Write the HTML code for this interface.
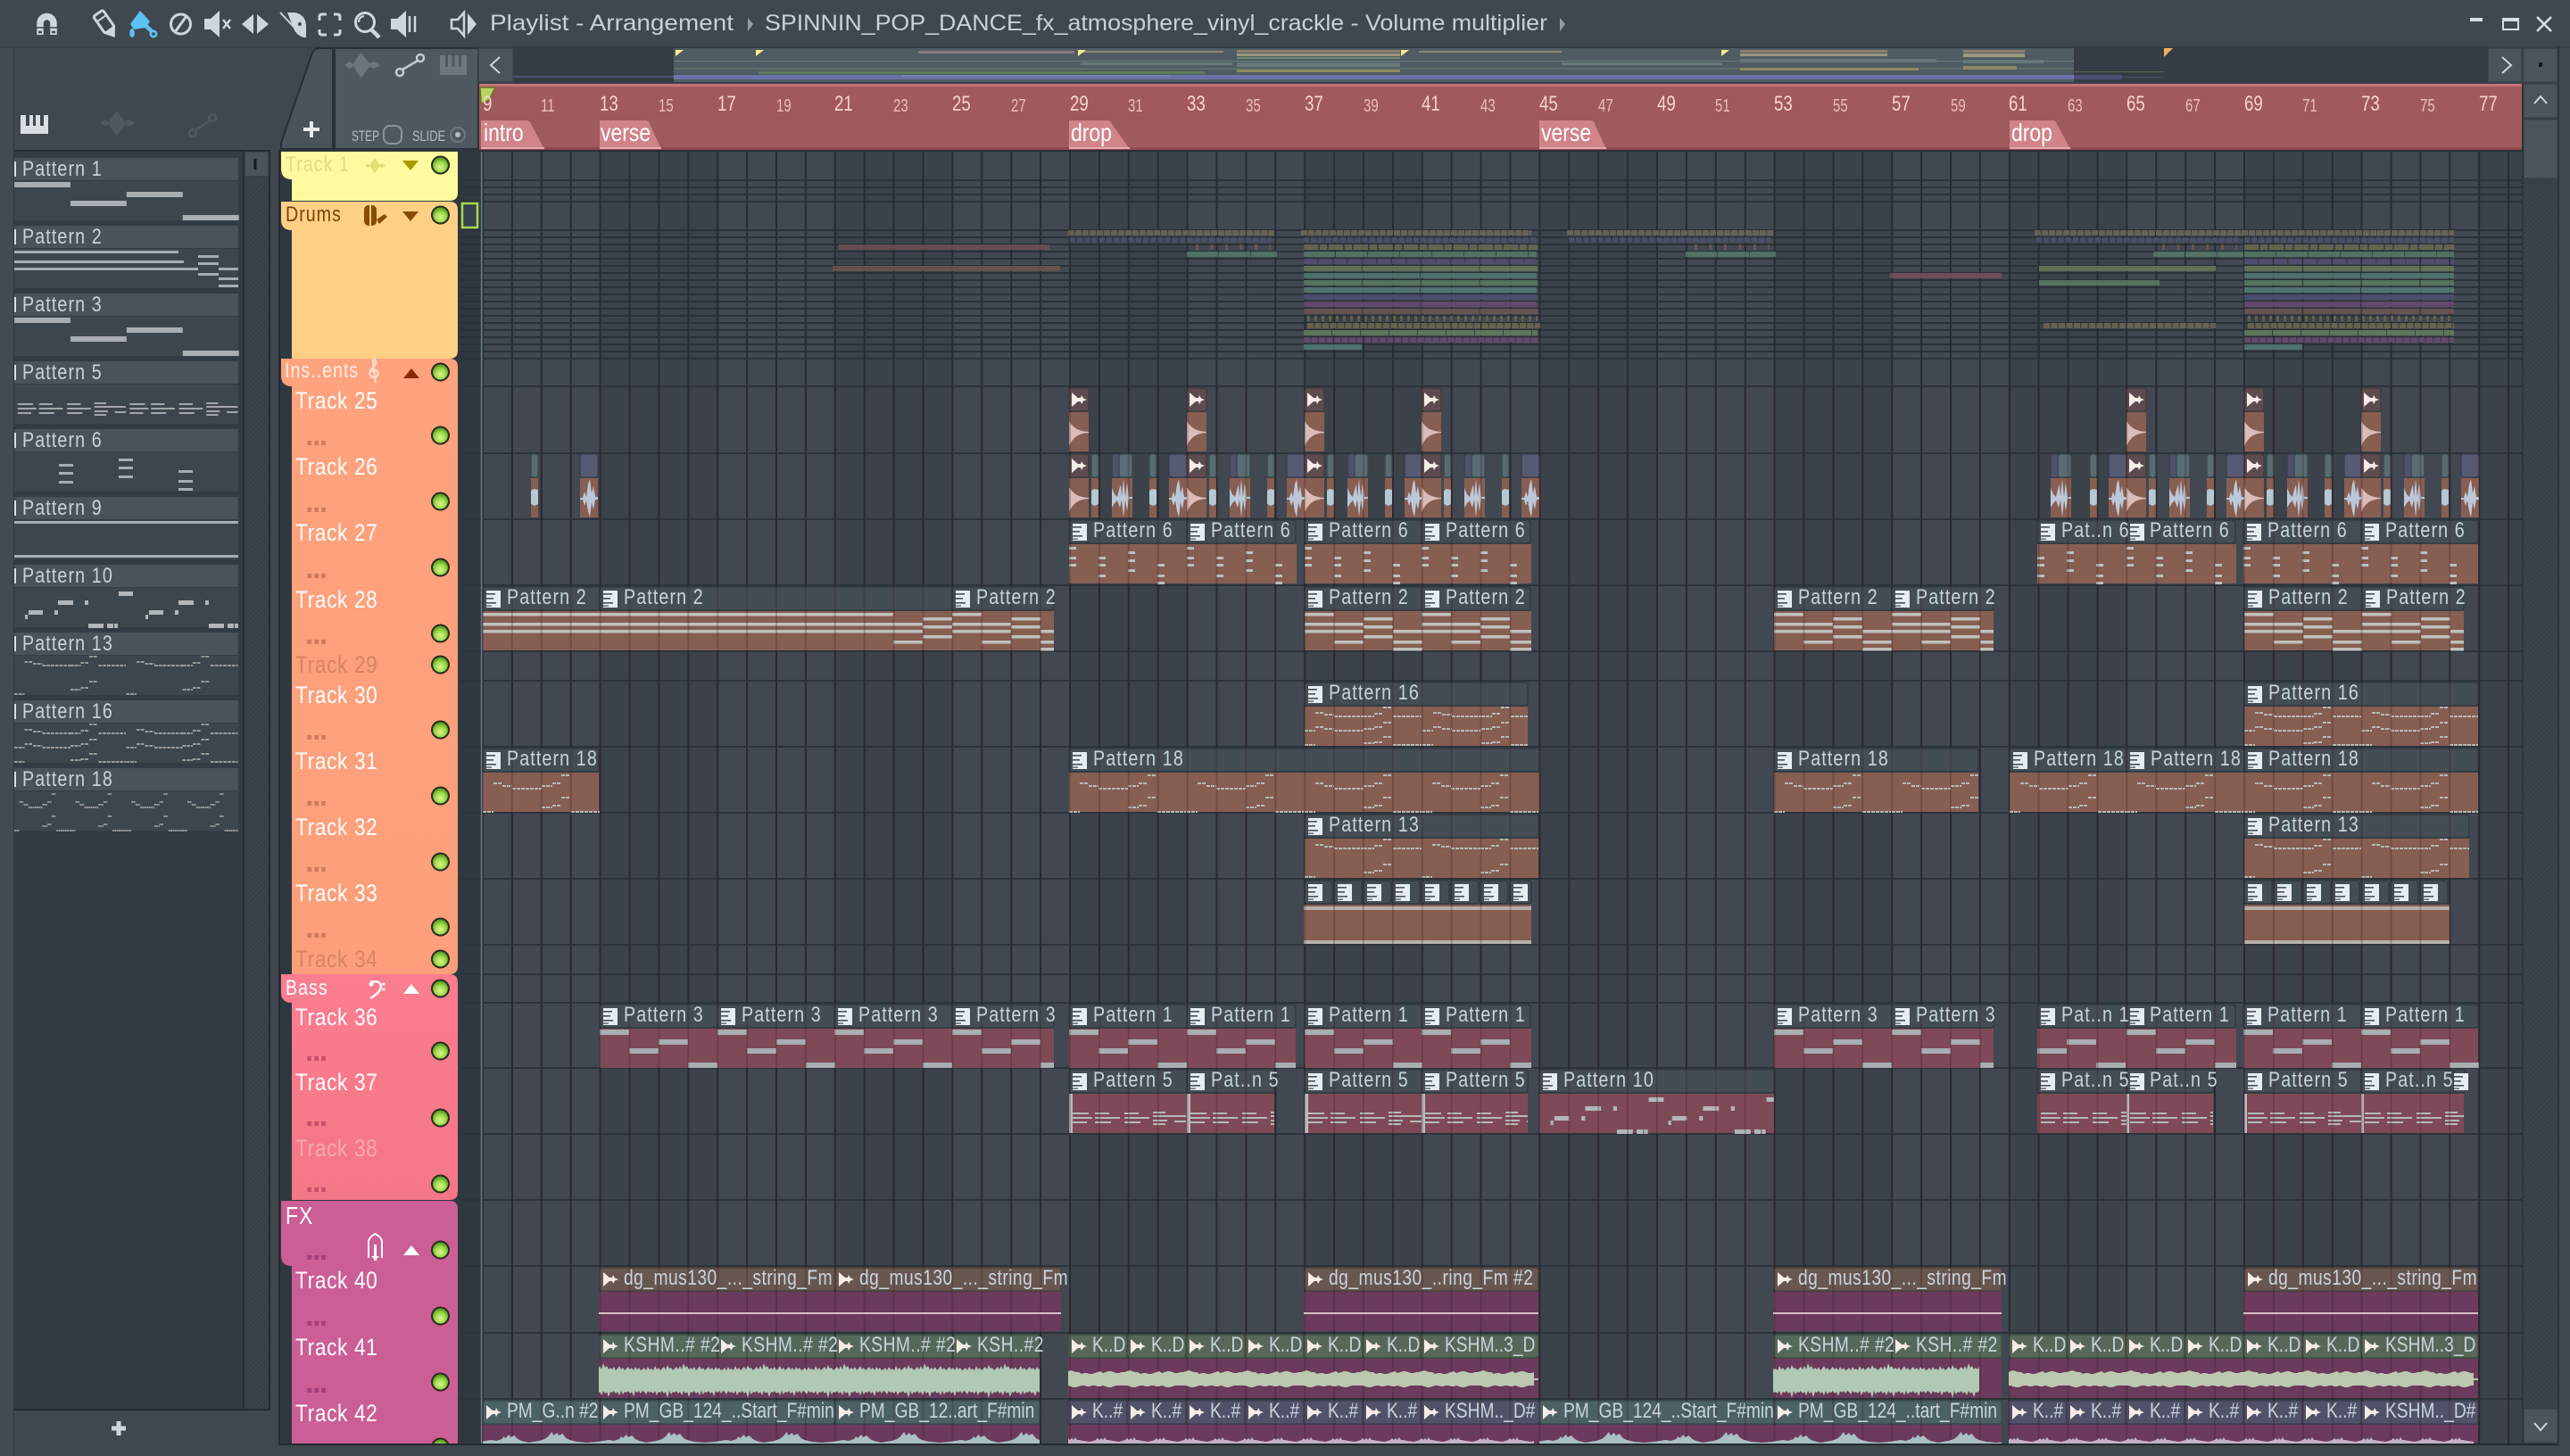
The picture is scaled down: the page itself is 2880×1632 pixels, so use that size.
<!DOCTYPE html>
<html><head><meta charset="utf-8"><title>Playlist - Arrangement</title>
<style>
html,body{margin:0;padding:0;background:#40474e}
#w{position:relative;width:2880px;height:1632px;overflow:hidden;background:#40474e;font-family:"Liberation Sans",sans-serif}
svg.m{position:absolute;left:0;top:0}
.x{position:absolute;left:0;width:0;height:0}
.x i,.x b{position:absolute;font-style:normal;white-space:pre;transform-origin:0 0;line-height:1}
.r i{top:2px;font-size:24px;letter-spacing:1.35px;color:#c8d4dc;transform:scaleX(.82)}
.r i.a{letter-spacing:0;transform:scaleX(.8)}
.r i.d{letter-spacing:.6px}
.n i{left:331px;top:3px;font-size:27px;letter-spacing:.75px;color:#fff;transform:scaleX(.84)}
.n b{left:342px;font-size:34px;font-weight:700;letter-spacing:-1.5px}
.g i{left:320px;font-size:24px;letter-spacing:1.2px;transform:scaleX(.82)}
.u i{top:105px;font-size:24px;color:#f8d2d2;transform:scaleX(.78)}
.u i.s{top:109px;font-size:20px;color:#eebcbc;transform:scaleX(.75)}
.u b{top:135px;font-weight:400;font-size:28px;color:#fff;transform:scaleX(.82)}
.q i{left:25px;font-size:24px;letter-spacing:1.35px;color:#c8d2d8;transform:scaleX(.82)}
rect.bi{y:29px;height:44px;fill:#875e52}
rect.bb{y:29px;height:44px;fill:#7f4a57}
rect.bf{y:29px;height:44px;fill:#6b3a5c}
rect.hp{y:2px;height:26px;rx:3px;fill:#444c54;stroke:#333a41;stroke-width:1.5}
rect.hd{y:2px;height:26px;rx:3px;fill:#685650;stroke:#4c413d;stroke-width:1.5}
rect.hk{y:2px;height:26px;rx:3px;fill:#57685a;stroke:#414e44;stroke-width:1.5}
rect.hu{y:2px;height:26px;rx:3px;fill:#50526a;stroke:#3d3e52;stroke-width:1.5}
rect.hm{y:2px;height:26px;rx:3px;fill:#4b6166;stroke:#3a4b4f;stroke-width:1.5}
.ic{fill:#cfd6db}.st{fill:none;stroke:#cfd6db}
</style></head><body><div id="w">
<svg class="m" width="2880" height="1632" viewBox="0 0 2880 1632" xmlns="http://www.w3.org/2000/svg">
<defs>
<pattern id="bd" patternUnits="userSpaceOnUse" x="540.6" y="0" width="263.2" height="10"><rect width="131.6" height="10" fill="#414851"/><rect x="131.6" width="131.6" height="10" fill="#3b424a"/></pattern>
<pattern id="vl" patternUnits="userSpaceOnUse" x="540" y="0" width="32.9" height="10"><rect width="2" height="10" fill="#262c33"/></pattern>
<pattern id="vo" patternUnits="userSpaceOnUse" x="540" y="0" width="32.9" height="10"><rect width="2" height="10" fill="#3a1c24" fill-opacity=".28"/></pattern>
<pattern id="r8" patternUnits="userSpaceOnUse" x="0" y="257" width="10" height="8"><rect width="10" height="2" fill="#2a3138"/></pattern>
<pattern id="ht" patternUnits="userSpaceOnUse" width="4" height="4" patternTransform="rotate(45)"><rect width="4" height="4" fill="#3c4349"/><rect width="2" height="4" fill="#373e45"/></pattern>
<pattern id="w1" patternUnits="userSpaceOnUse" x="0" y="0" width="90" height="74"><path d="M0 41L2 39L4 42L6 38L8 41L10 40L12 42L14 37L16 41L18 39L20 42L22 40L24 38L26 41L28 36L30 40L32 39L34 42L36 40L38 38L40 41L42 37L44 41L46 34L48 39L50 37L52 41L54 39L56 41L58 38L60 42L62 40L64 37L66 41L68 39L70 42L72 40L74 38L76 41L78 39L80 42L82 38L84 41L86 39L88 42L90 41V65L88 68L86 65L84 67L82 65L80 71L78 66L76 68L74 65L72 67L70 66L68 69L66 65L64 70L62 66L60 68L58 65L56 67L54 66L52 72L50 66L48 68L46 65L44 70L42 66L40 68L38 65L36 67L34 66L32 69L30 65L28 73L26 66L24 68L22 65L20 67L18 66L16 70L14 65L12 68L10 66L8 67L6 65L4 69L2 66L0 65Z" fill="#b0c8b4"/></pattern>
<pattern id="w2" patternUnits="userSpaceOnUse" x="0" y="0" width="66" height="74"><path d="M0 45L3 44L6 44L9 43L12 42L15 43L18 44L21 44L24 46L27 45L30 45L33 46L36 46L39 45L42 44L45 43L48 45L51 44L54 43L57 43L60 44L63 45L66 45V59L63 59L60 60L57 61L54 61L51 60L48 59L45 60L42 60L39 59L36 59L33 60L30 60L27 59L24 59L21 60L18 61L15 61L12 60L9 59L6 59L3 59L0 59Z" fill="#bcc8b0"/></pattern>
<pattern id="w3" patternUnits="userSpaceOnUse" x="0" y="0" width="131.6" height="74"><path d="M0 50V49L12 48L24 46L30 47L36 45L38 42L40 44L44 40L46 43L50 41L54 45L58 47L66 49L72 48L78 47L84 45L88 42L92 37L94 41L98 38L100 41L104 39L108 44L112 46L120 48L131.6 49V50Z" fill="#a9c0c4"/></pattern>
<pattern id="w4" patternUnits="userSpaceOnUse" x="0" y="0" width="33" height="74"><path d="M0 50V48L4 47L7 46L9 44L11 46L13 44L15 46L17 43L19 46L21 46L26 47L33 48V50Z" fill="#c5b0c8"/></pattern>
<radialGradient id="ledg" cx=".5" cy=".65" r=".6"><stop offset="0" stop-color="#dcf58a"/><stop offset=".6" stop-color="#9ad84a"/><stop offset="1" stop-color="#5d9c22"/></radialGradient>
<linearGradient id="ins" x1="0" y1="0" x2="0" y2="1"><stop offset="0" stop-color="#ffa27e"/><stop offset="1" stop-color="#fc9f7a"/></linearGradient>
<linearGradient id="bas" x1="0" y1="0" x2="0" y2="1"><stop offset="0" stop-color="#fb7d90"/><stop offset="1" stop-color="#f47786"/></linearGradient>
<g id="led"><circle r="10.5" fill="#262c1c"/><circle r="8.5" fill="url(#ledg)"/></g>
<path id="wv" d="M0 14L6 10L10 13L14 6L19 0L24 7L28 12L33 10L40 14L33 18L28 16L24 21L19 28L14 22L10 15L6 18Z"/>
<g id="pi"><rect width="16" height="19" fill="#e6edf2"/><path d="M0 3h10v1.6H0zM0 8h8v1.6H0zM0 13h11v1.6H0zM0 16.5h6v1.3H0z" fill="#4a5259"/></g>
<path id="ai" d="M0 0L7 6L10 6L11 3L13 6.5L17 8L13 9.500L11 13L10 10L7 10L0 16Z" fill="#f6ece8"/>
<g id="kw"><path d="M0 10C4 16 8 21 22 22V23C8 24 4 30 0 38Z" fill="#dcbcb8"/></g>
<g id="k"><rect class="hu" width="22" style="fill:#5c4c50;stroke:#463a3d"/><rect class="bi" width="22"/><use href="#ai" x="3" y="7"/><use href="#kw" x="0" y="29"/></g>
<g id="h1"><rect class="hm" width="8" style="fill:#586c72"/><rect class="bi" width="8"/><path d="M0 43L3 41L8 42V58L4 60L0 58Z" fill="#b6c8d2"/></g>
<g id="s1"><rect class="hu" width="10"/><rect class="hm" x="8" width="15" style="fill:#5a6c75"/><rect class="bi" width="23"/><path d="M0 51V40L3 47L6 50L8 42L10 36L11 50L13 30L15 50L17 34L19 50H23V52H19L17 66L15 53L13 73L11 53L9 62L6 54L3 57L0 62Z" fill="#bcc8d8"/></g>
<g id="s2"><rect class="hu" width="20" style="fill:#565a72"/><rect class="bi" width="20"/><path d="M0 51H3L5 44L7 50L9 36L11 30L13 46L15 38L17 50H20V53H17L15 64L13 56L11 73L9 66L7 54L5 60L3 53H0Z" fill="#bcc8d8"/></g>
<g id="bk"><use href="#k"/><use href="#h1" x="25"/><use href="#s1" x="48"/><use href="#h1" x="90"/><use href="#s2" x="112"/></g>
<g id="p6" fill="#bcc0bc"><path d="M0 32h8v3H0zM0 43h8v3H0zM0 51h8v3H0zM33 43h8v3h-8zM33 51h8v3h-8zM33 63h8v3h-8zM66 37h8v3h-8zM66 46h8v3h-8zM66 57h8v3h-8zM99 51h8v3h-8zM99 63h8v3h-8zM99 71h8v3h-8z"/></g>
<g id="p2" fill="#c0c0bc"><path d="M0 31h33v3.500H0zM0 42h33v3.500H0zM0 50h33v3.500H0zM33 42h33v3.500H33zM33 50h33v3.500H33zM33 62h33v3.500H33zM66 36h33v3.500H66zM66 45h33v3.500H66zM66 56h33v3.500H66zM99 50h33v3.500H99zM99 62h33v3.500H99zM99 70h33v3.500H99z"/></g>
<g id="p1" fill="#a9aeb2"><path d="M0 30h33v6H0zM33 51h33v6H33zM66 41h33v6H66zM99 67h33v6H99z"/></g>
<g id="p5" stroke="#b6b8ba" stroke-width="2" fill="none"><path d="M4 51H22M4 56H26M4 61H20M29 51H45M29 56H57M29 61H47M62 51H78M62 56H90M62 61H80M94 50H108M94 54H116M94 59H110M94 63H108M114 54H131M118 60H131"/></g>
<g id="p16" stroke="#b8b8b4" stroke-width="2" fill="none" stroke-dasharray="4 1"><path d="M12 36H22M22 38H33M33 40H66M66 40H78M78 37H88M88 30H98M99 40H131M0 56H12M12 52H22M22 54H33M33 56H66M66 54H78M78 52H88M88 47H98M0 72H12M66 70H78M78 69H88M88 63H98M99 72H131"/></g>
<g id="p13" stroke="#b8b8b4" stroke-width="2" fill="none" stroke-dasharray="4 1"><path d="M12 36H22M22 38H33M33 40H66M66 40H78M78 37H88M88 30H98M99 40H131M0 72H12M66 67H78M78 65H88M88 58H98"/></g>
<g id="p18" stroke="#b8b8b4" stroke-width="2" fill="none" stroke-dasharray="4 1"><path d="M12 41H22M22 44H33M33 47H66M66 44H78M78 41H88M88 32H98M88 57H98M66 68H78M78 66H88M0 73H12M99 73H131"/></g>
<g id="p10" fill="#b2b6b8"><path d="M117 33h16v5h-16zM49 43h17v5H49zM79 43h4v5h-4zM12 59h3v5h-3zM16 54h16v5H16zM45 54h4v5h-4zM83 69h17v5H83zM104 69h7v5h-7zM112 69h4v5h-4z"/></g>
<g id="drl" fill="none" stroke-width="6"><path d="M1197 261H1429" stroke="#6e6758" stroke-dasharray="7 1"/><path d="M1199 269H1425" stroke="#4f5170" stroke-dasharray="6 2.2"/><path d="M1340 277H1424" stroke="#6f5a4e" stroke-dasharray="3 13.500"/><path d="M1330 285H1431" stroke="#567a68" stroke-dasharray="35 1"/></g>
<g id="drb" fill="none" stroke-width="6">
<path d="M-3 261H255" stroke="#6e6758" stroke-dasharray="7 1"/><path d="M0 269H261" stroke="#4f5170" stroke-dasharray="6 2.2"/><path d="M0 277H262" stroke="#6c6a50" stroke-dasharray="16 2 8 2"/><path d="M0 285H261" stroke="#567a68" stroke-dasharray="35 1"/><path d="M0 293H261" stroke="#544f72" stroke-dasharray="15 1.500"/><path d="M0 301H262" stroke="#6a7a56" stroke-dasharray="64.800 1"/><path d="M0 309H262" stroke="#527a72" stroke-dasharray="130 1"/><path d="M0 317H262" stroke="#5a7d62" stroke-dasharray="64.800 1"/><path d="M0 325H262" stroke="#557c78" stroke-dasharray="130 1"/><path d="M0 333H262" stroke="#4f5074" stroke-dasharray="130 1"/><path d="M0 341H262" stroke="#6b4a78" stroke-dasharray="130 1"/><path d="M0 349H262" stroke="#6e5650" stroke-dasharray="64.800 1"/><path d="M4 357H262" stroke="#6a6a4a" stroke-dasharray="3 5"/><path d="M4 365H265" stroke="#70684f" stroke-dasharray="7 1.500"/><path d="M0 373H262" stroke="#64805a" stroke-dasharray="31 1"/><path d="M0 381H262" stroke="#6b4a6e" stroke-dasharray="7 1.500"/><path d="M0 389H65" stroke="#527a7a"/></g>
</defs>

<!-- base panels -->
<rect width="2880" height="1632" fill="#40474e"/>
<rect x="15" y="52" width="1" height="1580" fill="#2f363d"/>
<rect x="0" y="52" width="15" height="1580" fill="#434a52"/>
<rect y="52" x="0" width="2880" height="2" fill="#353c43" opacity=".6"/>
<rect x="16" y="54" width="297" height="114" fill="#40474e"/>
<rect x="16" y="168" width="287" height="2" fill="#252b31"/>
<!-- picker -->
<rect x="16" y="170" width="256" height="1409" fill="#333b44"/>
<rect x="272" y="170" width="2" height="1409" fill="#232a31"/>
<rect x="274" y="170" width="27" height="1409" fill="url(#ht)"/>
<rect x="301" y="170" width="2" height="1411" fill="#232a31"/>
<rect x="16" y="1579" width="287" height="2" fill="#232a31"/>
<rect x="274" y="170" width="27" height="28" fill="#4b535b" stroke="#2f363d"/>
<rect x="284.500" y="178" width="3" height="12" fill="#16191d"/>
<g fill="#4b535a"><rect x="16" y="177" width="251" height="25"/><rect x="16" y="253" width="251" height="25"/><rect x="16" y="329" width="251" height="25"/><rect x="16" y="405" width="251" height="25"/><rect x="16" y="481" width="251" height="25"/><rect x="16" y="557" width="251" height="25"/><rect x="16" y="633" width="251" height="25"/><rect x="16" y="709" width="251" height="25"/><rect x="16" y="785" width="251" height="25"/><rect x="16" y="861" width="251" height="25"/></g>
<g fill="#3d454d"><rect x="16" y="203" width="251" height="44"/><rect x="16" y="279" width="251" height="44"/><rect x="16" y="355" width="251" height="44"/><rect x="16" y="431" width="251" height="44"/><rect x="16" y="507" width="251" height="44"/><rect x="16" y="583" width="251" height="44"/><rect x="16" y="659" width="251" height="44"/><rect x="16" y="735" width="251" height="44"/><rect x="16" y="811" width="251" height="44"/><rect x="16" y="887" width="251" height="44"/></g>
<g fill="#d8dee2"><rect x="16" y="181" width="2" height="17"/><rect x="16" y="257" width="2" height="17"/><rect x="16" y="333" width="2" height="17"/><rect x="16" y="409" width="2" height="17"/><rect x="16" y="485" width="2" height="17"/><rect x="16" y="561" width="2" height="17"/><rect x="16" y="637" width="2" height="17"/><rect x="16" y="713" width="2" height="17"/><rect x="16" y="789" width="2" height="17"/><rect x="16" y="865" width="2" height="17"/></g>
<use href="#p1" transform="translate(16,174) scale(1.907,1)"/>
<g fill="#a3adb3"><path d="M16 281h161v3H16zM16 292h190v3H16zM16 300h206v3H16zM177 281h23v3h-23zM222 286h23v3h-23zM222 294h23v3h-23zM222 306h23v3h-23zM245 300h22v3h-22zM245 311h22v3h-22zM245 319h22v3h-22z"/></g>
<use href="#p1" transform="translate(16,326) scale(1.907,1)"/>
<g opacity=".85"><use href="#p5" transform="translate(16,402) scale(.954,1)"/><use href="#p5" transform="translate(141.500,402) scale(.954,1)"/></g>
<g fill="#a3adb3"><path d="M66 520h16v3H66zM66 529h16v3H66zM66 539h16v3H66zM133 514h16v3h-16zM133 523h16v3h-16zM133 533h16v3h-16zM200 527h16v3h-16zM200 538h16v3h-16zM200 547h16v3h-16zM16 584h251v3H16zM16 622h251v3H16z"/></g>
<use href="#p10" transform="translate(16,630)"/><svg x="151" y="630" width="116" height="80"><use href="#p10"/></svg>
<g opacity=".75"><use href="#p13" transform="translate(16,706) scale(.954,1)"/><use href="#p13" transform="translate(141.500,706) scale(.954,1)"/>
<use href="#p16" transform="translate(16,782) scale(.954,1)"/><use href="#p16" transform="translate(141.500,782) scale(.954,1)"/>
<use href="#p18" transform="translate(16,858) scale(.477,1)"/><use href="#p18" transform="translate(78.800,858) scale(.477,1)"/><use href="#p18" transform="translate(141.500,858) scale(.477,1)"/><use href="#p18" transform="translate(204.300,858) scale(.477,1)"/></g>
<!-- bottom + -->
<path d="M125 1601h16M133 1593v16" stroke="#cfd6db" stroke-width="5"/>

<!-- tabs -->
<path d="M315 167L315 160L349 62Q351 54 358 54H373V167Z" fill="#4a525a" stroke="#282e35" stroke-width="2"/>
<rect x="375" y="54" width="161" height="113" fill="#4f575f" stroke="#2c3239" stroke-width="2"/>
<rect x="536" y="54" width="39" height="38" fill="#4b535b" stroke="#353c43"/>
<path d="M349 136v18M340 145h18" stroke="#e8ecef" stroke-width="4"/>
<use href="#wv" x="386" y="59" fill="#6d767e"/>
<g fill="none" stroke="#c3cbd1" stroke-width="2.5"><circle cx="448" cy="81" r="4"/><circle cx="471" cy="65" r="4"/><path d="M451 78L468 68"/></g>
<g><rect x="493" y="62" width="30" height="22" fill="#6f7880"/><path d="M499 62h3v13h-3zM506.500 62h3v13h-3zM514 62h3v13h-3z" fill="#4f575f"/></g>
<rect x="430" y="141" width="20" height="20" rx="7" fill="none" stroke="#8c959c" stroke-width="2"/>
<circle cx="513" cy="151" r="8" fill="none" stroke="#6f7880" stroke-width="2"/><circle cx="513" cy="151" r="3" fill="#b5bdc3"/>
<!-- picker tab icons -->
<rect x="23" y="129" width="31" height="21" fill="#d8dee2"/><path d="M29 129h4v12h-4zM37 129h3v12h-3zM45 129h4v12h-4z" fill="#40474e"/>
<use href="#wv" x="112" y="124" fill="#4f5861"/>
<g fill="none" stroke="#4f5861" stroke-width="2.5"><circle cx="216" cy="149" r="4"/><circle cx="238" cy="132" r="4"/><path d="M219 146L235 135"/></g>

<!-- overview -->
<rect x="575" y="52" width="2213" height="41" fill="#363c44"/>
<rect x="755" y="54" width="1569" height="38" fill="#4f5c63"/>
<rect x="575" y="85" width="180" height="2" fill="#4e5070"/>
<rect x="755" y="84" width="1569" height="5" fill="#6a72a8"/>
<rect x="1010" y="84" width="300" height="2" fill="#7a80b4"/>
<rect x="2324" y="84" width="54" height="5" fill="#4a4f78"/><rect x="2378" y="86" width="47" height="1" fill="#4a4f78"/>
<rect x="2324" y="80" width="101" height="1" fill="#4f6a55"/>
<g fill="#6a7a80"><rect x="755" y="68" width="1569" height="1"/><rect x="755" y="76" width="1569" height="2" fill="#5c6c6a"/></g>
<g><rect x="1029" y="57" width="175" height="3" fill="#8a7a80"/><rect x="1211" y="57" width="160" height="2" fill="#8a8a70"/><rect x="1386" y="56" width="183" height="3" fill="#8c7f70"/><rect x="1386" y="60" width="183" height="3" fill="#9a9a80"/><rect x="1386" y="64" width="183" height="2" fill="#6e8a78"/><rect x="1386" y="70" width="183" height="5" fill="#66787a"/><rect x="1386" y="78" width="183" height="3" fill="#8c8a60"/><rect x="1590" y="57" width="160" height="2" fill="#8a8a70"/><rect x="1750" y="70" width="180" height="3" fill="#667a78"/><rect x="1950" y="56" width="165" height="3" fill="#8c7f70"/><rect x="1950" y="60" width="165" height="3" fill="#9a9a80"/><rect x="1950" y="66" width="220" height="4" fill="#66787a"/><rect x="1950" y="76" width="200" height="3" fill="#8c8a60"/><rect x="2200" y="56" width="69" height="3" fill="#8c7f70"/><rect x="2200" y="60" width="69" height="4" fill="#9a9a80"/><rect x="2200" y="67" width="90" height="4" fill="#66787a"/><rect x="2200" y="74" width="60" height="4" fill="#8c8a60"/><rect x="1211" y="70" width="170" height="3" fill="#667a78"/><rect x="850" y="80" width="500" height="3" fill="#5f7a5c"/></g>
<g fill="#f5ea8f"><path d="M757 56h9l-9 7zM847 56h9l-9 7zM1208 56h9l-9 7zM1570 56h9l-9 7zM1929 56h9l-9 7z"/></g>
<path d="M2425 54h10l-10 10z" fill="#f5ae5e"/>
<rect x="2788" y="54" width="38" height="38" fill="#4b535b" stroke="#353c43"/>
<rect x="2828" y="54" width="38" height="38" fill="#4b535b" stroke="#353c43"/>
<path d="M560 64L550 73L560 82" fill="none" stroke="#cfd6db" stroke-width="2"/>
<path d="M2804 64L2814 73L2804 82" fill="none" stroke="#cfd6db" stroke-width="2"/>
<rect x="2845" y="70" width="4" height="5" fill="#16191d"/>

<!-- right scroll -->
<rect x="2828" y="94" width="38" height="1485" fill="url(#ht)"/>
<rect x="2828" y="94" width="38" height="38" fill="#4b535b" stroke="#353c43"/>
<path d="M2840 116L2847 108L2854 116" fill="none" stroke="#cfd6db" stroke-width="2"/>
<rect x="2828" y="134" width="38" height="66" fill="#4b535b" stroke="#353c43"/>
<rect x="2828" y="1579" width="38" height="38" fill="#4b535b" stroke="#353c43"/>
<path d="M2840 1595L2847 1603L2854 1595" fill="none" stroke="#cfd6db" stroke-width="2"/>

<!-- track strip + grid -->
<rect x="313" y="168" width="225" height="1452" fill="#2f3840"/>
<rect x="538" y="170" width="2288" height="1448" fill="url(#bd)"/>
<rect x="516" y="257" width="2310" height="145" fill="url(#r8)"/>
<g fill="#2c333a"><rect x="516" y="201" width="2310" height="2"/><rect x="516" y="209" width="2310" height="2"/><rect x="516" y="217" width="2310" height="2"/><rect x="516" y="225" width="2310" height="2"/><rect x="516" y="401" width="2310" height="2"/><rect x="516" y="432" width="2310" height="2"/><rect x="516" y="507" width="2310" height="2"/><rect x="516" y="581" width="2310" height="2"/><rect x="516" y="655" width="2310" height="2"/><rect x="516" y="729" width="2310" height="2"/><rect x="516" y="762" width="2310" height="2"/><rect x="516" y="836" width="2310" height="2"/><rect x="516" y="910" width="2310" height="2"/><rect x="516" y="984" width="2310" height="2"/><rect x="516" y="1058" width="2310" height="2"/><rect x="516" y="1091" width="2310" height="2"/><rect x="516" y="1123" width="2310" height="2"/><rect x="516" y="1196" width="2310" height="2"/><rect x="516" y="1270" width="2310" height="2"/><rect x="516" y="1344" width="2310" height="2"/><rect x="516" y="1418" width="2310" height="2"/><rect x="516" y="1493" width="2310" height="2"/><rect x="516" y="1567" width="2310" height="2"/></g>
<rect x="540" y="170" width="2286" height="1448" fill="url(#vl)"/>
<rect x="539" y="170" width="1.500" height="1448" fill="#6d7f8c"/>
<rect x="518" y="228" width="17" height="27" fill="#36424a" stroke="#a8d84e" stroke-width="2.500"/>

<!-- drums clips -->
<g opacity=".85">
<use href="#drl"/>
<use href="#drb" x="1461"/>
<svg x="2512" y="250" width="238" height="150"><use href="#drb" y="-250" x="3"/></svg>
<use href="#drl" transform="translate(559,0)"/>
<use href="#drl" transform="translate(1083,0)"/>
<g fill="none" stroke-width="6"><path d="M2285 301H2483" stroke="#6a7a56"/><path d="M2290 365H2483" stroke="#70684f" stroke-dasharray="7 1.500"/><path d="M2285 317H2420" stroke="#5a7d62"/><path d="M940 277H1176" stroke="#6f4f55"/><path d="M933 301H1188" stroke="#6f5350"/><path d="M2118 309H2243" stroke="#76505a"/></g>
</g>

<!-- Track 25 -->
<g transform="translate(0,433)"><use href="#k" x="1198"/><use href="#k" x="1330"/><use href="#k" x="1462"/><use href="#k" x="1593"/><use href="#k" x="2383"/><use href="#k" x="2515"/><use href="#k" x="2646"/></g>
<!-- Track 26 -->
<g transform="translate(0,507)"><use href="#h1" x="595"/><use href="#s2" x="650"/><use href="#bk" x="1198"/><use href="#bk" x="1330"/><use href="#bk" x="1462"/><use href="#bk" x="1593"/><use href="#s1" x="2298"/><use href="#h1" x="2342"/><use href="#s2" x="2363"/><use href="#bk" x="2383"/><use href="#bk" x="2515"/><use href="#bk" x="2646"/></g>
<!-- Track 27 -->
<g transform="translate(0,581)">
<rect class="bi" x="1198" width="132"/><rect class="bi" x="1330" width="123"/><rect class="bi" x="1462" width="131"/><rect class="bi" x="1593" width="123"/><rect class="bi" x="2283" width="100"/><rect class="bi" x="2383" width="123"/><rect class="bi" x="2514" width="132"/><rect class="bi" x="2646" width="131"/>
<rect class="hp" x="1198" width="132"/><rect class="hp" x="1330" width="122"/><rect class="hp" x="1462" width="131"/><rect class="hp" x="1593" width="122"/><rect class="hp" x="2283" width="100"/><rect class="hp" x="2383" width="122"/><rect class="hp" x="2514" width="132"/><rect class="hp" x="2646" width="131"/>
<use href="#p6" x="1198"/><svg x="1330" width="123" height="74"><use href="#p6"/></svg><use href="#p6" x="1462"/><svg x="1593" width="123" height="74"><use href="#p6"/></svg><svg x="2283" width="100" height="74"><use href="#p6" x="-33"/></svg><svg x="2383" width="123" height="74"><use href="#p6"/></svg><use href="#p6" x="2514"/><use href="#p6" x="2646"/>
<use href="#pi" x="1202" y="6"/><use href="#pi" x="1334" y="6"/><use href="#pi" x="1466" y="6"/><use href="#pi" x="1597" y="6"/><use href="#pi" x="2287" y="6"/><use href="#pi" x="2387" y="6"/><use href="#pi" x="2518" y="6"/><use href="#pi" x="2650" y="6"/></g>
<!-- Track 28 -->
<g transform="translate(0,656)">
<rect class="bi" x="541" width="131"/><rect class="bi" x="672" width="395"/><rect class="bi" x="1067" width="114"/><rect class="bi" x="1462" width="131"/><rect class="bi" x="1593" width="123"/><rect class="bi" x="1988" width="132"/><rect class="bi" x="2120" width="114"/><rect class="bi" x="2515" width="132"/><rect class="bi" x="2647" width="114"/>
<rect class="hp" x="541" width="131"/><rect class="hp" x="672" width="395"/><rect class="hp" x="1067" width="114"/><rect class="hp" x="1462" width="131"/><rect class="hp" x="1593" width="122"/><rect class="hp" x="1988" width="132"/><rect class="hp" x="2120" width="114"/><rect class="hp" x="2515" width="132"/><rect class="hp" x="2647" width="114"/>
<path d="M541 31H968v3.500H541zM541 42H968v3.500H541zM541 50H968v3.500H541z" fill="#c0c0bc"/>
<svg x="968" width="99" height="74"><use href="#p2"/></svg><svg x="1067" width="114" height="74"><use href="#p2"/></svg><use href="#p2" x="1462"/><svg x="1593" width="123" height="74"><use href="#p2"/></svg><use href="#p2" x="1988"/><svg x="2120" width="114" height="74"><use href="#p2"/></svg><use href="#p2" x="2515"/><svg x="2647" width="114" height="74"><use href="#p2"/></svg>
<use href="#pi" x="545" y="6"/><use href="#pi" x="676" y="6"/><use href="#pi" x="1071" y="6"/><use href="#pi" x="1466" y="6"/><use href="#pi" x="1597" y="6"/><use href="#pi" x="1992" y="6"/><use href="#pi" x="2124" y="6"/><use href="#pi" x="2519" y="6"/><use href="#pi" x="2651" y="6"/></g>
<!-- Track 30 -->
<g transform="translate(0,763)"><rect class="bi" x="1462" width="250"/><rect class="bi" x="2515" width="262"/><rect class="hp" x="1462" width="250"/><rect class="hp" x="2515" width="262"/><use href="#p16" x="1462"/><svg x="1594" width="118" height="74"><use href="#p16"/></svg><use href="#p16" x="2515"/><use href="#p16" x="2646"/><use href="#pi" x="1466" y="6"/><use href="#pi" x="2519" y="6"/></g>
<!-- Track 31 -->
<g transform="translate(0,837)"><rect class="bi" x="541" width="130"/><rect class="bi" x="1198" width="527"/><rect class="bi" x="1988" width="229"/><rect class="bi" x="2252" width="525"/><rect class="hp" x="541" width="130"/><rect class="hp" x="1198" width="527"/><rect class="hp" x="1988" width="229"/><rect class="hp" x="2252" width="131"/><rect class="hp" x="2383" width="132"/><rect class="hp" x="2515" width="262"/>
<use href="#p18" x="541"/><use href="#p18" x="1198"/><use href="#p18" x="1330"/><use href="#p18" x="1462"/><use href="#p18" x="1593"/><use href="#p18" x="1988"/><svg x="2120" width="97" height="74"><use href="#p18"/></svg><use href="#p18" x="2252"/><use href="#p18" x="2383"/><use href="#p18" x="2515"/><use href="#p18" x="2646"/>
<use href="#pi" x="545" y="6"/><use href="#pi" x="1202" y="6"/><use href="#pi" x="1992" y="6"/><use href="#pi" x="2256" y="6"/><use href="#pi" x="2387" y="6"/><use href="#pi" x="2519" y="6"/></g>
<!-- Track 32 -->
<g transform="translate(0,911)"><rect class="bi" x="1462" width="262"/><rect class="bi" x="2515" width="252"/><rect class="hp" x="1462" width="262"/><rect class="hp" x="2515" width="252"/><use href="#p13" x="1462"/><use href="#p13" x="1593"/><use href="#p13" x="2515"/><svg x="2646" width="121" height="74"><use href="#p13"/></svg><use href="#pi" x="1466" y="6"/><use href="#pi" x="2519" y="6"/></g>
<!-- Track 33 -->
<g transform="translate(0,985)"><rect class="bi" x="1461" width="255"/><rect class="bi" x="2515" width="230"/>
<path d="M1461 31h255v4H1461zM1461 69h255v4H1461zM2515 31h230v4H2515zM2515 69h230v4H2515z" fill="#b6b0ab"/>
<rect class="hp" x="1462" width="31"/><rect class="hp" x="1495" width="31"/><rect class="hp" x="1528" width="31"/><rect class="hp" x="1560" width="31"/><rect class="hp" x="1593" width="31"/><rect class="hp" x="1626" width="31"/><rect class="hp" x="1659" width="31"/><rect class="hp" x="1692" width="24"/>
<rect class="hp" x="2515" width="31"/><rect class="hp" x="2548" width="31"/><rect class="hp" x="2581" width="31"/><rect class="hp" x="2613" width="31"/><rect class="hp" x="2646" width="31"/><rect class="hp" x="2679" width="31"/><rect class="hp" x="2712" width="31"/>
<use href="#pi" x="1466" y="6"/><use href="#pi" x="1499" y="6"/><use href="#pi" x="1532" y="6"/><use href="#pi" x="1564" y="6"/><use href="#pi" x="1597" y="6"/><use href="#pi" x="1630" y="6"/><use href="#pi" x="1663" y="6"/><use href="#pi" x="1696" y="6"/>
<use href="#pi" x="2519" y="6"/><use href="#pi" x="2552" y="6"/><use href="#pi" x="2585" y="6"/><use href="#pi" x="2617" y="6"/><use href="#pi" x="2650" y="6"/><use href="#pi" x="2683" y="6"/><use href="#pi" x="2716" y="6"/></g>
<!-- Track 36 -->
<g transform="translate(0,1124)">
<rect class="bb" x="672" width="509"/><rect class="bb" x="1198" width="254"/><rect class="bb" x="1462" width="254"/><rect class="bb" x="1988" width="246"/><rect class="bb" x="2283" width="223"/><rect class="bb" x="2514" width="263"/>
<rect class="hp" x="672" width="132"/><rect class="hp" x="804" width="131"/><rect class="hp" x="935" width="132"/><rect class="hp" x="1067" width="114"/><rect class="hp" x="1198" width="132"/><rect class="hp" x="1330" width="122"/><rect class="hp" x="1462" width="131"/><rect class="hp" x="1593" width="122"/><rect class="hp" x="1988" width="132"/><rect class="hp" x="2120" width="114"/><rect class="hp" x="2283" width="100"/><rect class="hp" x="2383" width="122"/><rect class="hp" x="2514" width="132"/><rect class="hp" x="2646" width="131"/>
<use href="#p1" x="672"/><use href="#p1" x="804"/><use href="#p1" x="935"/><svg x="1067" width="114" height="74"><use href="#p1"/></svg><use href="#p1" x="1198"/><svg x="1330" width="122" height="74"><use href="#p1"/></svg><use href="#p1" x="1462"/><svg x="1593" width="123" height="74"><use href="#p1"/></svg><use href="#p1" x="1988"/><svg x="2120" width="114" height="74"><use href="#p1"/></svg><svg x="2283" width="100" height="74"><use href="#p1" x="-33"/></svg><svg x="2383" width="123" height="74"><use href="#p1"/></svg><use href="#p1" x="2514"/><use href="#p1" x="2646"/>
<use href="#pi" x="676" y="6"/><use href="#pi" x="808" y="6"/><use href="#pi" x="939" y="6"/><use href="#pi" x="1071" y="6"/><use href="#pi" x="1202" y="6"/><use href="#pi" x="1334" y="6"/><use href="#pi" x="1466" y="6"/><use href="#pi" x="1597" y="6"/><use href="#pi" x="1992" y="6"/><use href="#pi" x="2124" y="6"/><use href="#pi" x="2287" y="6"/><use href="#pi" x="2387" y="6"/><use href="#pi" x="2518" y="6"/><use href="#pi" x="2650" y="6"/></g>
<!-- Track 37 -->
<g transform="translate(0,1197)">
<rect class="bb" x="1198" width="230"/><rect class="bb" x="1462" width="250"/><rect class="bb" x="1725" width="263"/><rect class="bb" x="2283" width="197"/><rect class="bb" x="2515" width="246"/>
<rect class="hp" x="1198" width="132"/><rect class="hp" x="1330" width="98"/><rect class="hp" x="1462" width="131"/><rect class="hp" x="1593" width="119"/><rect class="hp" x="1725" width="263"/><rect class="hp" x="2283" width="100"/><rect class="hp" x="2383" width="97"/><rect class="hp" x="2515" width="131"/><rect class="hp" x="2646" width="104"/><rect class="hp" x="2750" width="12"/>
<use href="#p5" x="1198"/><svg x="1330" width="98" height="74"><use href="#p5"/></svg><use href="#p5" x="1462"/><svg x="1593" width="119" height="74"><use href="#p5"/></svg><svg x="1725" width="263" height="74"><use href="#p10" transform="scale(1.048,1)"/><use href="#p10" transform="translate(132,0) scale(1.048,1)"/></svg><svg x="2283" width="100" height="74"><use href="#p5"/></svg><svg x="2383" width="97" height="74"><use href="#p5"/></svg><use href="#p5" x="2515"/><svg x="2646" width="115" height="74"><use href="#p5"/></svg>
<path d="M1198 29h4v44h-4zM1330 29h4v44h-4zM1462 29h4v44h-4zM1593 29h4v44h-4zM2383 29h3v44h-3zM2515 29h3v44h-3zM2646 29h3v44h-3z" fill="#b8bcc0"/>
<use href="#pi" x="1202" y="6"/><use href="#pi" x="1334" y="6"/><use href="#pi" x="1466" y="6"/><use href="#pi" x="1597" y="6"/><use href="#pi" x="1729" y="6"/><use href="#pi" x="2287" y="6"/><use href="#pi" x="2387" y="6"/><use href="#pi" x="2519" y="6"/><use href="#pi" x="2650" y="6"/><use href="#pi" x="2750" y="6"/></g>
<!-- Track 40 -->
<g transform="translate(0,1419)">
<rect class="bf" x="671" width="518"/><rect class="bf" x="1461" width="263"/><rect class="bf" x="1987" width="256"/><rect class="bf" x="2514" width="263"/>
<rect class="hd" x="672" width="264"/><rect class="hd" x="936" width="253"/><rect class="hd" x="1462" width="262"/><rect class="hd" x="1988" width="255"/><rect class="hd" x="2515" width="262"/>
<use href="#ai" x="676" y="7"/><use href="#ai" x="940" y="7"/><use href="#ai" x="1466" y="7"/><use href="#ai" x="1992" y="7"/><use href="#ai" x="2519" y="7"/></g>
<!-- Track 41 -->
<g transform="translate(0,1494)">
<rect class="bf" x="671" width="494"/><rect class="bf" x="1197" width="527"/><rect class="bf" x="1987" width="256"/><rect class="bf" x="2251" width="526"/>
<rect class="hk" x="672" width="132" style="fill:#55685c"/><rect class="hk" x="804" width="132" style="fill:#55685c"/><rect class="hk" x="936" width="132" style="fill:#55685c"/><rect class="hk" x="1068" width="97" style="fill:#55685c"/>
<rect class="hk" x="1197" width="66"/><rect class="hk" x="1263" width="66"/><rect class="hk" x="1329" width="66"/><rect class="hk" x="1395" width="66"/><rect class="hk" x="1461" width="66"/><rect class="hk" x="1527" width="65"/><rect class="hk" x="1592" width="132"/>
<rect class="hk" x="1988" width="132" style="fill:#55685c"/><rect class="hk" x="2120" width="123" style="fill:#55685c"/>
<rect class="hk" x="2251" width="65"/><rect class="hk" x="2316" width="66"/><rect class="hk" x="2382" width="66"/><rect class="hk" x="2448" width="66"/><rect class="hk" x="2514" width="66"/><rect class="hk" x="2580" width="66"/><rect class="hk" x="2646" width="131"/>
<use href="#ai" x="676" y="7"/><use href="#ai" x="808" y="7"/><use href="#ai" x="940" y="7"/><use href="#ai" x="1072" y="7"/><use href="#ai" x="1201" y="7"/><use href="#ai" x="1267" y="7"/><use href="#ai" x="1333" y="7"/><use href="#ai" x="1399" y="7"/><use href="#ai" x="1465" y="7"/><use href="#ai" x="1531" y="7"/><use href="#ai" x="1596" y="7"/><use href="#ai" x="1992" y="7"/><use href="#ai" x="2124" y="7"/><use href="#ai" x="2255" y="7"/><use href="#ai" x="2320" y="7"/><use href="#ai" x="2386" y="7"/><use href="#ai" x="2452" y="7"/><use href="#ai" x="2518" y="7"/><use href="#ai" x="2584" y="7"/><use href="#ai" x="2650" y="7"/></g>
<!-- Track 42 -->
<g transform="translate(0,1568)">
<rect class="bf" x="541" width="624"/><rect class="bf" x="1197" width="791"/><rect class="bf" x="1988" width="255"/><rect class="bf" x="2251" width="526"/>
<rect class="hm" x="541" width="131"/><rect class="hm" x="672" width="264"/><rect class="hm" x="936" width="229"/>
<rect class="hu" x="1197" width="66"/><rect class="hu" x="1263" width="66"/><rect class="hu" x="1329" width="66"/><rect class="hu" x="1395" width="66"/><rect class="hu" x="1461" width="66"/><rect class="hu" x="1527" width="65"/><rect class="hu" x="1592" width="133"/>
<rect class="hm" x="1725" width="263"/><rect class="hm" x="1988" width="255"/>
<rect class="hu" x="2251" width="65"/><rect class="hu" x="2316" width="66"/><rect class="hu" x="2382" width="66"/><rect class="hu" x="2448" width="66"/><rect class="hu" x="2514" width="66"/><rect class="hu" x="2580" width="66"/><rect class="hu" x="2646" width="131"/>
<use href="#ai" x="545" y="7"/><use href="#ai" x="676" y="7"/><use href="#ai" x="940" y="7"/><use href="#ai" x="1201" y="7"/><use href="#ai" x="1267" y="7"/><use href="#ai" x="1333" y="7"/><use href="#ai" x="1399" y="7"/><use href="#ai" x="1465" y="7"/><use href="#ai" x="1531" y="7"/><use href="#ai" x="1596" y="7"/><use href="#ai" x="1729" y="7"/><use href="#ai" x="1992" y="7"/><use href="#ai" x="2255" y="7"/><use href="#ai" x="2320" y="7"/><use href="#ai" x="2386" y="7"/><use href="#ai" x="2452" y="7"/><use href="#ai" x="2518" y="7"/><use href="#ai" x="2584" y="7"/><use href="#ai" x="2650" y="7"/></g>
<!-- bar lines over clip bodies -->
<rect x="540" y="433" width="2286" height="1185" fill="url(#vo)"/>
<!-- audio waveforms above bar lines -->
<path d="M671 1471h518v2H671zM1461 1471h263v2H1461zM1987 1471h256v2H1987zM2514 1471h263v2H2514z" fill="#d8bcc8"/>
<g transform="translate(0,1494)">
<rect x="671" y="29" width="494" height="44" fill="url(#w1)"/><rect x="1987" y="29" width="231" height="44" fill="url(#w1)"/>
<rect x="1197" y="29" width="522" height="44" fill="url(#w2)"/><rect x="2251" y="29" width="521" height="44" fill="url(#w2)"/>
<path d="M1719 51h5v2h-5zM2772 51h5v2h-5z" fill="#bcc8b0"/></g>
<g transform="translate(0,1568)">
<rect x="541" y="29" width="624" height="22" fill="url(#w3)"/><rect x="1725" y="29" width="518" height="22" fill="url(#w3)"/>
<rect x="1197" y="29" width="522" height="22" fill="url(#w4)"/><rect x="2251" y="29" width="521" height="22" fill="url(#w4)"/></g>

<!-- group panels -->
<path d="M315 170H513V216Q513 225 504 225H327V201Q315 201 315 189Z" fill="#fdfb9d"/>
<path d="M315 226H504Q513 226 513 235V393Q513 402 504 402H327V258Q315 258 315 246Z" fill="#fdd086"/>
<path d="M315 402H504Q513 402 513 411V1083Q513 1092 504 1092H327V433Q315 433 315 421Z" fill="url(#ins)"/>
<path d="M315 1092H504Q513 1092 513 1101V1336Q513 1345 504 1345H327V1124Q315 1124 315 1112Z" fill="url(#bas)"/>
<path d="M315 1346H504Q513 1346 513 1355V1620H327V1419Q315 1419 315 1407Z" fill="#cc5e96"/>
<!-- group icons -->
<use href="#wv" transform="translate(409,177) scale(.58,.62)" fill="#e4df78"/>
<path d="M451 180h18l-9 11z" fill="#a89a00"/>
<g fill="#8a4a00"><rect x="408" y="230" width="14" height="23" rx="5"/><rect x="414" y="230" width="2" height="23" fill="#fdd086"/><path d="M422 246L431 240L434 243L425 251Z"/></g>
<path d="M451 237h18l-9 11z" fill="#8a4a00"/>
<path d="M421 429L418 406Q418 401 420 403Q424 407 416 414Q412 420 418 423Q425 423 423 416Q420 413 417 417" fill="none" stroke="#fbdccd" stroke-width="2.300"/>
<path d="M452 424h18l-9-11z" fill="#8a2a00"/>
<path d="M415 1101Q425 1098 427 1105Q427 1112 415 1119" fill="none" stroke="#fff" stroke-width="2.500"/><circle cx="416" cy="1103" r="2.500" fill="#fff"/><circle cx="430" cy="1103" r="1.600" fill="#fff"/><circle cx="430" cy="1109" r="1.600" fill="#fff"/>
<path d="M452 1114h18l-9-11z" fill="#fff"/>
<path d="M413 1410V1392Q413 1387 420.500 1383Q428 1387 428 1392V1410" fill="none" stroke="#fff" stroke-width="2"/><path d="M419 1395h3v13h3l-3 3v2h-3v-2l-3-3h3z" fill="#fff"/>
<path d="M452 1407h18l-9-11z" fill="#fff"/>
<!-- LEDs -->
<use href="#led" x="493.500" y="185"/><use href="#led" x="493.500" y="241"/><use href="#led" x="493.500" y="417"/><use href="#led" x="493.500" y="488"/><use href="#led" x="493.500" y="562"/><use href="#led" x="493.500" y="636"/><use href="#led" x="493.500" y="710"/><use href="#led" x="493.500" y="745"/><use href="#led" x="493.500" y="818"/><use href="#led" x="493.500" y="892"/><use href="#led" x="493.500" y="966"/><use href="#led" x="493.500" y="1039"/><use href="#led" x="493.500" y="1075"/><use href="#led" x="493.500" y="1108"/><use href="#led" x="493.500" y="1178"/><use href="#led" x="493.500" y="1253"/><use href="#led" x="493.500" y="1327"/><use href="#led" x="493.500" y="1401"/><use href="#led" x="493.500" y="1475"/><use href="#led" x="493.500" y="1549"/><use href="#led" x="493.500" y="1622"/>

<!-- ruler -->
<rect x="537" y="94" width="2289" height="74" fill="#a0595c"/>
<rect x="537" y="94" width="2289" height="3" fill="#c27478"/>
<rect x="537" y="165" width="2289" height="3" fill="#94494d"/>
<rect x="537" y="168" width="2289" height="2" fill="#2a2f36"/>
<g fill="#d08488"><path d="M539 135H590Q594 135 595 139L610 167H539Z"/><path d="M672 135H723Q727 135 728 139L741 167H672Z"/><path d="M1198 135H1241Q1245 135 1246 139L1266 167H1198Z"/><path d="M1725 135H1782Q1786 135 1787 139L1800 167H1725Z"/><path d="M2252 135H2300Q2304 135 2305 139L2320 167H2252Z"/></g>
<g fill="#e8a8aa"><rect x="539" y="165" width="71" height="2"/><rect x="672" y="165" width="69" height="2"/><rect x="1198" y="165" width="68" height="2"/><rect x="1725" y="165" width="75" height="2"/><rect x="2252" y="165" width="68" height="2"/></g>
<path d="M538 98H555L548 112L539 116Z" fill="#b4d464" stroke="#6d6f1e" stroke-width="1.500"/>

<!-- toolbar icons -->
<path d="M45 39V26a7.500 7.500 0 0 1 15 0V39" fill="none" stroke="#cfd6db" stroke-width="7.500"/><path d="M41 31h8M56 31h8" stroke="#40474e" stroke-width="1.500"/><path d="M43 36h4M58 36h4" stroke="#40474e" stroke-width="2.500"/>
<g transform="rotate(-35 119 28)"><rect x="112.500" y="12" width="13" height="23" rx="2" fill="none" stroke="#cfd6db" stroke-width="3"/><path d="M111 34H127L119 45Z" fill="#cfd6db"/><path d="M112 19h13" stroke="#cfd6db" stroke-width="2"/></g>
<g fill="#5cc0f5"><path d="M157 12L146 27L150 33L163 31L168 24Z"/><path d="M160 29L164 26L174 36L171 39Z"/><circle cx="172" cy="38" r="4.500"/><ellipse cx="148" cy="37" rx="2.800" ry="5"/></g><circle cx="172" cy="38" r="1.800" fill="#40474e"/>
<circle cx="202.500" cy="27" r="11" fill="none" stroke="#cfd6db" stroke-width="3"/><path d="M196 36L209 18" stroke="#cfd6db" stroke-width="3"/>
<path class="ic" d="M229 21H236L246 12V42L236 33H229Z"/><path d="M250 22L258 32M258 22L250 32" stroke="#cfd6db" stroke-width="2.500"/>
<path class="ic" d="M271 27L284 16V38ZM301 27L288 16V38Z"/>
<path class="ic" d="M322 14L330 14C340 16 343 22 343 30V42C336 42 332 38 329 32Z"/><path d="M314 14L329 30" stroke="#cfd6db" stroke-width="2"/><circle cx="336" cy="27" r="2" fill="#40474e"/>
<path class="st" stroke-width="3" d="M358 23V19Q358 16 361 16H366M374 16H378Q381 16 381 19V23M381 33V36Q381 39 378 39H374M366 39H361Q358 39 358 36V33"/>
<circle cx="409" cy="25" r="10.500" class="st" stroke-width="3"/><path d="M416 33L425 42" stroke="#cfd6db" stroke-width="4.500"/><path d="M402 25Q402 19 408 18" class="st" stroke-width="2"/>
<path class="ic" d="M438 21H445L455 12V42L445 33H438Z"/><path d="M459 18V36M465 18V36" stroke="#cfd6db" stroke-width="2.500"/>
<path d="M506 22H513L520 14V40L513 32H506Z" class="st" stroke-width="2.500"/><path class="ic" d="M524 15L534 27L524 39Z"/>
<path class="ic" d="M838 20L844 27L838 35Z" opacity=".6"/><path class="ic" d="M1748 20L1754 27L1748 35Z" opacity=".6"/>
<rect x="2768" y="20" width="14" height="4" fill="#d8dfe4"/>
<rect x="2805" y="21" width="17" height="12" fill="none" stroke="#d8dfe4" stroke-width="2"/><rect x="2804" y="20" width="19" height="4" fill="#d8dfe4"/>
<path d="M2843 19L2859 35M2859 19L2843 35" stroke="#d8dfe4" stroke-width="2.500"/>
<!-- title (real text) -->
<text x="549" y="34" font-family="Liberation Sans, sans-serif" font-size="25" fill="#c6d2da" textLength="273" lengthAdjust="spacingAndGlyphs">Playlist - Arrangement</text>
<text x="857" y="34" font-family="Liberation Sans, sans-serif" font-size="25" fill="#c6d2da" textLength="877" lengthAdjust="spacingAndGlyphs">SPINNIN_POP_DANCE_fx_atmosphere_vinyl_crackle - Volume multiplier</text>
<text x="394" y="158" font-family="Liberation Sans, sans-serif" font-size="17" fill="#b5bdc3" textLength="31" lengthAdjust="spacingAndGlyphs">STEP</text>
<text x="462" y="158" font-family="Liberation Sans, sans-serif" font-size="17" fill="#b5bdc3" textLength="37" lengthAdjust="spacingAndGlyphs">SLIDE</text>
<!-- bottom & right frame -->
<rect x="313" y="1618" width="2553" height="14" fill="#40474e"/>
<rect x="313" y="1618" width="2553" height="2" fill="#232a31"/>
<rect x="2866" y="52" width="2" height="1568" fill="#2d343b"/>
<rect x="2826" y="94" width="2" height="1525" fill="#2d343b"/>
<rect x="312" y="168" width="2" height="1451" fill="#252b31"/>
</svg>

<!-- picker labels -->
<div class="x q"><i style="top:178px">Pattern 1</i><i style="top:254px">Pattern 2</i><i style="top:330px">Pattern 3</i><i style="top:406px">Pattern 5</i><i style="top:482px">Pattern 6</i><i style="top:558px">Pattern 9</i><i style="top:634px">Pattern 10</i><i style="top:710px">Pattern 13</i><i style="top:786px">Pattern 16</i><i style="top:862px">Pattern 18</i></div>

<!-- ruler labels -->
<div class="x u"><i style="left:541px">9</i><i class="s" style="left:606px">11</i><i style="left:672px">13</i><i class="s" style="left:738px">15</i><i style="left:804px">17</i><i class="s" style="left:870px">19</i><i style="left:935px">21</i><i class="s" style="left:1001px">23</i><i style="left:1067px">25</i><i class="s" style="left:1133px">27</i><i style="left:1199px">29</i><i class="s" style="left:1264px">31</i><i style="left:1330px">33</i><i class="s" style="left:1396px">35</i><i style="left:1462px">37</i><i class="s" style="left:1528px">39</i><i style="left:1593px">41</i><i class="s" style="left:1659px">43</i><i style="left:1725px">45</i><i class="s" style="left:1791px">47</i><i style="left:1857px">49</i><i class="s" style="left:1922px">51</i><i style="left:1988px">53</i><i class="s" style="left:2054px">55</i><i style="left:2120px">57</i><i class="s" style="left:2186px">59</i><i style="left:2251px">61</i><i class="s" style="left:2317px">63</i><i style="left:2383px">65</i><i class="s" style="left:2449px">67</i><i style="left:2515px">69</i><i class="s" style="left:2580px">71</i><i style="left:2646px">73</i><i class="s" style="left:2712px">75</i><i style="left:2778px">77</i>
<b style="left:542px">intro</b><b style="left:673px">verse</b><b style="left:1200px">drop</b><b style="left:1727px">verse</b><b style="left:2254px">drop</b></div>

<!-- group labels -->
<div class="x g"><i style="top:173px;color:#dedd7f">Track 1</i><i style="top:229px;color:#7a4500">Drums</i><i style="top:404px;left:319px;color:#fff0e6">Ins..ents</i><i style="top:1096px;color:#fff">Bass</i><i style="top:1349px;font-size:28px;color:#fff">FX</i></div>

<!-- track names -->
<div class="x n" style="top:433px"><i>Track 25</i><b style="top:38px;color:#cf7d5c">...</b></div>
<div class="x n" style="top:507px"><i>Track 26</i><b style="top:39px;color:#cf7d5c">...</b></div>
<div class="x n" style="top:581px"><i>Track 27</i><b style="top:39px;color:#cf7d5c">...</b></div>
<div class="x n" style="top:656px"><i>Track 28</i><b style="top:38px;color:#cf7d5c">...</b></div>
<div class="x n" style="top:729px"><i style="color:#d88460">Track 29</i></div>
<div class="x n" style="top:763px"><i>Track 30</i><b style="top:38px;color:#cf7d5c">...</b></div>
<div class="x n" style="top:837px"><i>Track 31</i><b style="top:38px;color:#cf7d5c">...</b></div>
<div class="x n" style="top:911px"><i>Track 32</i><b style="top:38px;color:#cf7d5c">...</b></div>
<div class="x n" style="top:985px"><i>Track 33</i><b style="top:38px;color:#cf7d5c">...</b></div>
<div class="x n" style="top:1059px"><i style="color:#d88460">Track 34</i></div>
<div class="x n" style="top:1124px"><i>Track 36</i><b style="top:37px;color:#c94f68">...</b></div>
<div class="x n" style="top:1197px"><i>Track 37</i><b style="top:37px;color:#c94f68">...</b></div>
<div class="x n" style="top:1271px"><i style="color:#f8a8b0">Track 38</i><b style="top:37px;color:#c94f68">...</b></div>
<div class="x n" style="top:1345px"><b style="top:39px;color:#a5407a">...</b></div>
<div class="x n" style="top:1419px"><i>Track 40</i><b style="top:39px;color:#a5407a">...</b></div>
<div class="x n" style="top:1494px"><i>Track 41</i><b style="top:39px;color:#a5407a">...</b></div>
<div class="x n" style="top:1568px"><i>Track 42</i></div>

<!-- clip labels -->
<div class="x r" style="top:581px"><i style="left:1225px">Pattern 6</i><i style="left:1357px">Pattern 6</i><i style="left:1489px">Pattern 6</i><i style="left:1620px">Pattern 6</i><i style="left:2310px">Pat..n 6</i><i style="left:2409px">Pattern 6</i><i style="left:2541px">Pattern 6</i><i style="left:2673px">Pattern 6</i></div>
<div class="x r" style="top:656px"><i style="left:568px">Pattern 2</i><i style="left:699px">Pattern 2</i><i style="left:1094px">Pattern 2</i><i style="left:1489px">Pattern 2</i><i style="left:1620px">Pattern 2</i><i style="left:2015px">Pattern 2</i><i style="left:2147px">Pattern 2</i><i style="left:2542px">Pattern 2</i><i style="left:2674px">Pattern 2</i></div>
<div class="x r" style="top:763px"><i style="left:1489px">Pattern 16</i><i style="left:2542px">Pattern 16</i></div>
<div class="x r" style="top:837px"><i style="left:568px">Pattern 18</i><i style="left:1225px">Pattern 18</i><i style="left:2015px">Pattern 18</i><i style="left:2279px">Pattern 18</i><i style="left:2410px">Pattern 18</i><i style="left:2542px">Pattern 18</i></div>
<div class="x r" style="top:911px"><i style="left:1489px">Pattern 13</i><i style="left:2542px">Pattern 13</i></div>
<div class="x r" style="top:1124px"><i style="left:699px">Pattern 3</i><i style="left:831px">Pattern 3</i><i style="left:962px">Pattern 3</i><i style="left:1094px">Pattern 3</i><i style="left:1225px">Pattern 1</i><i style="left:1357px">Pattern 1</i><i style="left:1489px">Pattern 1</i><i style="left:1620px">Pattern 1</i><i style="left:2015px">Pattern 3</i><i style="left:2147px">Pattern 3</i><i style="left:2310px">Pat..n 1</i><i style="left:2409px">Pattern 1</i><i style="left:2541px">Pattern 1</i><i style="left:2673px">Pattern 1</i></div>
<div class="x r" style="top:1197px"><i style="left:1225px">Pattern 5</i><i style="left:1357px">Pat..n 5</i><i style="left:1489px">Pattern 5</i><i style="left:1620px">Pattern 5</i><i style="left:1752px">Pattern 10</i><i style="left:2310px">Pat..n 5</i><i style="left:2409px">Pat..n 5</i><i style="left:2542px">Pattern 5</i><i style="left:2673px">Pat..n 5</i></div>
<div class="x r" style="top:1419px"><i class="a d" style="left:699px">dg_mus130_..._string_Fm</i><i class="a d" style="left:963px">dg_mus130_..._string_Fm</i><i class="a d" style="left:1489px">dg_mus130_..ring_Fm #2</i><i class="a d" style="left:2015px">dg_mus130_..._string_Fm</i><i class="a d" style="left:2542px">dg_mus130_..._string_Fm</i></div>
<div class="x r" style="top:1494px"><i class="a d" style="left:699px">KSHM..# #2</i><i class="a d" style="left:831px">KSHM..# #2</i><i class="a d" style="left:963px">KSHM..# #2</i><i class="a d" style="left:1095px">KSH..#2</i><i class="a" style="left:1224px">K..D</i><i class="a" style="left:1290px">K..D</i><i class="a" style="left:1356px">K..D</i><i class="a" style="left:1422px">K..D</i><i class="a" style="left:1488px">K..D</i><i class="a" style="left:1554px">K..D</i><i class="a" style="left:1619px">KSHM..3_D</i><i class="a d" style="left:2015px">KSHM..# #2</i><i class="a d" style="left:2147px">KSH..# #2</i><i class="a" style="left:2278px">K..D</i><i class="a" style="left:2343px">K..D</i><i class="a" style="left:2409px">K..D</i><i class="a" style="left:2475px">K..D</i><i class="a" style="left:2541px">K..D</i><i class="a" style="left:2607px">K..D</i><i class="a" style="left:2673px">KSHM..3_D</i></div>
<div class="x r" style="top:1568px"><i class="a" style="left:568px">PM_G..n #2</i><i class="a" style="left:699px">PM_GB_124_..Start_F#min</i><i class="a" style="left:963px">PM_GB_12..art_F#min</i><i class="a" style="left:1224px">K..#</i><i class="a" style="left:1290px">K..#</i><i class="a" style="left:1356px">K..#</i><i class="a" style="left:1422px">K..#</i><i class="a" style="left:1488px">K..#</i><i class="a" style="left:1554px">K..#</i><i class="a" style="left:1619px">KSHM.._D#</i><i class="a" style="left:1752px">PM_GB_124_..Start_F#min</i><i class="a" style="left:2015px">PM_GB_124_..tart_F#min</i><i class="a" style="left:2278px">K..#</i><i class="a" style="left:2343px">K..#</i><i class="a" style="left:2409px">K..#</i><i class="a" style="left:2475px">K..#</i><i class="a" style="left:2541px">K..#</i><i class="a" style="left:2607px">K..#</i><i class="a" style="left:2673px">KSHM.._D#</i></div>
</div></body></html>
